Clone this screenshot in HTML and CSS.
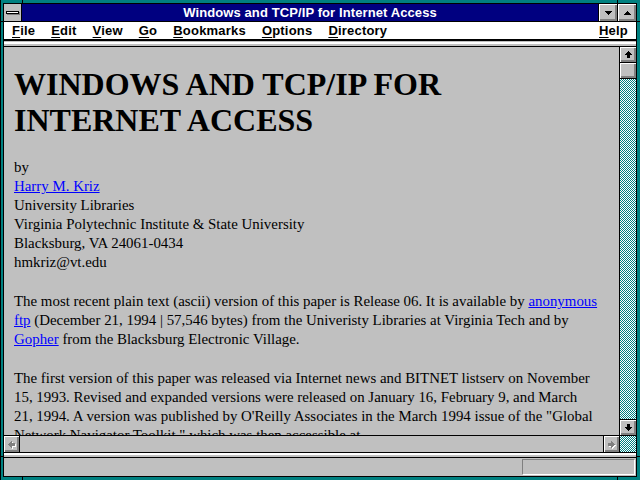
FILE: index.html
```html
<!DOCTYPE html>
<html>
<head>
    <title>Windows and TCP/IP for Internet Access</title>
    <link rel="stylesheet" href="styles.css">
</head>
<body>
<div class="frame">
    <!-- corner marks on the sizing border -->
    <div class="mark mark-tl"></div>
    <div class="mark mark-tr"></div>
    <div class="mark mark-bl"></div>
    <div class="mark mark-br"></div>
    <div class="mark mark-lt"></div>
    <div class="mark mark-lb"></div>
    <div class="mark mark-rt"></div>
    <div class="mark mark-rb"></div>

    <div class="window">
        <div class="titlebar">
            <div class="sysmenu"><div class="sysbar"></div></div>
            <div class="title">Windows and TCP/IP for Internet Access</div>
            <div class="tbtn">
                <svg width="7" height="4" viewBox="0 0 7 4"><path d="M0 0H7V1H6V2H5V3H4V4H3V3H2V2H1V1H0Z"/></svg>
            </div>
            <div class="tbtn">
                <svg width="7" height="4" viewBox="0 0 7 4"><path d="M3 0H4V1H5V2H6V3H7V4H0V3H1V2H2V1H3Z"/></svg>
            </div>
        </div>

        <ul class="menubar">
            <li><u>F</u>ile</li>
            <li><u>E</u>dit</li>
            <li><u>V</u>iew</li>
            <li><u>G</u>o</li>
            <li><u>B</u>ookmarks</li>
            <li><u>O</u>ptions</li>
            <li><u>D</u>irectory</li>
            <li class="help"><u>H</u>elp</li>
        </ul>
        <div class="sep"></div>

        <div class="view">
            <div class="page">
                <h1>WINDOWS AND TCP/IP FOR<br>INTERNET ACCESS</h1>

                <p>by<br>
                <a href="#">Harry M. Kriz</a><br>
                University Libraries<br>
                Virginia Polytechnic Institute &amp; State University<br>
                Blacksburg, VA 24061-0434<br>
                hmkriz@vt.edu</p>

                <p class="lines">The most recent plain text (ascii) version of this paper is Release 06. It is available by <a href="#">anonymous<br>ftp</a> (December 21, 1994 | 57,546 bytes) from the Univeristy Libraries at Virginia Tech and by<br>
                <a href="#">Gopher</a> from the Blacksburg Electronic Village.</p>

                <p class="lines">The first version of this paper was released via Internet news and BITNET listserv on November<br>
                15, 1993. Revised and expanded versions were released on January 16, February 9, and March<br>
                21, 1994. A version was published by O'Reilly Associates in the March 1994 issue of the "Global<br>
                Network Navigator Toolkit," which was then accessible at</p>
            </div>

            <div class="vscroll">
                <div class="sbtn sbtn-up">
                    <svg width="7" height="7" viewBox="0 0 7 7"><path d="M3 0H4V1H5V2H6V3H7V4H5V7H2V4H0V3H1V2H2V1H3Z"/></svg>
                </div>
                <div class="thumb"></div>
                <div class="track"></div>
                <div class="sbtn sbtn-down">
                    <svg width="7" height="7" viewBox="0 0 7 7"><path d="M2 0H5V3H7V4H6V5H5V6H4V7H3V6H2V5H1V4H0V3H2Z"/></svg>
                </div>
            </div>
        </div>

        <div class="hscroll">
            <div class="sbtn sbtn-left">
                <svg width="8" height="8" viewBox="0 0 8 8">
                    <path class="shade" transform="translate(1 1)" d="M0 3V4H1V5H2V6H3V7H4V5H7V2H4V0H3V1H2V2H1V3Z"/>
                    <path class="dim" d="M0 3V4H1V5H2V6H3V7H4V5H7V2H4V0H3V1H2V2H1V3Z"/>
                </svg>
            </div>
            <div class="htrack"></div>
            <div class="sbtn sbtn-right">
                <svg width="8" height="8" viewBox="0 0 8 8">
                    <path class="shade" transform="translate(1 1)" d="M7 3V4H6V5H5V6H4V7H3V5H0V2H3V0H4V1H5V2H6V3Z"/>
                    <path class="dim" d="M7 3V4H6V5H5V6H4V7H3V5H0V2H3V0H4V1H5V2H6V3Z"/>
                </svg>
            </div>
            <div class="corner"></div>
        </div>
        <div class="sep2"></div>

        <div class="status">
            <div class="statbox"></div>
        </div>
    </div>
</div>
</body>
</html>
```

FILE: styles.css
```css
body {
    margin: 0;
    padding: 0;
    overflow: hidden;
    background-color: #008080;
}

.frame {
    position: relative;
    width: 640px;
    height: 480px;
    box-sizing: border-box;
    background-color: #008080;
    border-left: 1px solid #000;
    padding: 3px 3px 3px 2px;
}

.mark {
    position: absolute;
    background-color: #000;
}
.mark-tl, .mark-tr { top: 0; width: 1px; height: 3px; }
.mark-bl, .mark-br { bottom: 0; width: 1px; height: 3px; }
.mark-tl, .mark-bl { left: 21px; }
.mark-tr, .mark-br { left: 616px; }
.mark-lt, .mark-lb { left: 0; width: 3px; height: 1px; }
.mark-rt, .mark-rb { right: 0; width: 3px; height: 1px; }
.mark-lt, .mark-rt { top: 21px; }
.mark-lb, .mark-rb { top: 456px; }

.window {
    height: 100%;
    box-sizing: border-box;
    border: 1px solid #000;
    background-color: #c0c0c0;
    display: flex;
    flex-direction: column;
}

/* title bar */
.titlebar {
    display: flex;
    height: 17px;
    border-bottom: 1px solid #000;
}

.sysmenu {
    width: 17px;
    border-right: 1px solid #000;
    background-color: #c0c0c0;
    display: flex;
    align-items: center;
    justify-content: center;
}

.sysbar {
    width: 11px;
    height: 1px;
    background-color: #fff;
    border: 1px solid #000;
    box-shadow: 1px 1px #808080;
}

.title {
    flex: 1;
    background-color: #000080;
    color: #fff;
    font-family: "Liberation Sans", Arial, sans-serif;
    font-weight: bold;
    font-size: 13px;
    letter-spacing: 0.1px;
    line-height: 17px;
    text-align: center;
    white-space: nowrap;
}

.tbtn {
    width: 18px;
    border-left: 1px solid #000;
    background-color: #c0c0c0;
    box-shadow: inset 1px 1px #fff, inset -1px -1px #808080, inset -2px -2px #808080;
    display: flex;
    align-items: center;
    justify-content: center;
}

/* menu */
.menubar {
    list-style-type: none;
    margin: 0;
    padding: 0;
    display: flex;
    height: 17px;
    background-color: #fff;
    border-bottom: 2px solid #000;
    font-family: "Liberation Sans", Arial, sans-serif;
    font-weight: bold;
    font-size: 13px;
    letter-spacing: 0.2px;
    line-height: 17px;
}

.menubar li {
    padding: 0 8px;
}

.menubar u {
    text-underline-offset: 2px;
}

.menubar .help {
    margin-left: auto;
}

.sep {
    height: 5px;
    background: linear-gradient(#c0c0c0 1px, #fff 1px, #fff 3px, #c0c0c0 3px);
    border-bottom: 1px solid #000;
}

.sep2 {
    height: 4px;
    background: linear-gradient(#fff 2px, #c0c0c0 2px);
    border-bottom: 1px solid #000;
}

/* document area */
.view {
    display: flex;
    height: 388px;
}

.page {
    flex: 1;
    overflow: hidden;
    padding: 0 10px;
    font-family: "Liberation Serif", "Times New Roman", serif;
    font-size: 14.9px;
    line-height: 19px;
    color: #000;
}

.page h1 {
    font-size: 32px;
    line-height: 36px;
    margin: 19px 0 20px;
}

.page p {
    margin: 20px 0;
}

.page .lines {
    white-space: nowrap;
}

.page a {
    color: #0000ff;
}

/* scroll bars */
.vscroll {
    width: 16px;
    border-left: 1px solid #000;
    display: flex;
    flex-direction: column;
}

.sbtn, .thumb {
    background-color: #c0c0c0;
    box-shadow: inset 1px 1px #fff, inset -1px -1px #808080, inset -2px -2px #808080;
    display: flex;
    align-items: center;
    justify-content: center;
}

.sbtn-up, .thumb {
    height: 15px;
    border-bottom: 1px solid #000;
}

.sbtn-down {
    height: 15px;
    border-top: 1px solid #000;
}

.track, .corner {
    background-image: repeating-conic-gradient(#008080 0 25%, #fff 0 50%);
    background-size: 2px 2px;
}

.track {
    flex: 1;
}

.hscroll {
    display: flex;
    height: 16px;
    border-top: 1px solid #000;
    border-bottom: 1px solid #000;
}

.sbtn-left {
    width: 15px;
    border-right: 1px solid #000;
}

.htrack {
    flex: 1;
}

.sbtn-right {
    width: 15px;
    border-left: 1px solid #000;
}

.sbtn-left svg, .sbtn-right svg {
    margin: 1px 0 0 1px;
}

.shade {
    fill: #fff;
}

.dim {
    fill: #808080;
}

.corner {
    width: 16px;
    border-left: 1px solid #000;
}

/* status line */
.status {
    flex: 1;
    display: flex;
    justify-content: flex-end;
    align-items: center;
    padding-right: 1px;
}

.statbox {
    width: 111px;
    height: 14px;
    border-top: 1px solid #808080;
    border-left: 1px solid #808080;
    border-bottom: 1px solid #fff;
    border-right: 1px solid #fff;
}
```
